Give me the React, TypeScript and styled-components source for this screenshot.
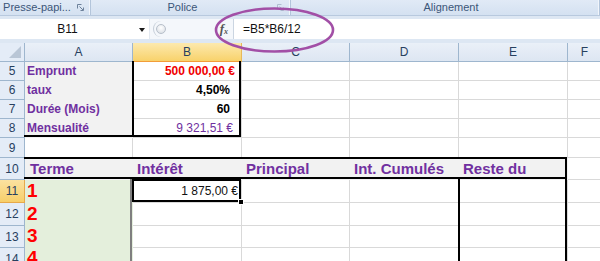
import React from 'react';
import styled, { createGlobalStyle, css } from 'styled-components';

const Global = createGlobalStyle`
  html, body { margin: 0; padding: 0; background: #fff; }
  body { font-family: "Liberation Sans", Arial, sans-serif; width: 600px; height: 261px; overflow: hidden; }
`;

const GRID = '#d9d9d9';
const HEAD_LINE = '#9eb6ce';
const HEAVY = '2px solid #000';
const GRAY_HEAVY = '2px solid #7f7f7f';
const PURPLE = '#7030a0';
const LIGHT = '#f2f2f2';
const GREEN = '#e4efdc';

const Page = styled.div`
  position: relative;
  width: 600px;
  height: 261px;
  overflow: hidden;
  background: #dde7f3;
  display: flex;
  flex-direction: column;
`;

/* ---------- ribbon group labels ---------- */
const Ribbon = styled.div`
  display: flex;
  height: 15px;
  flex: 0 0 15px;
  background: linear-gradient(#e1eaf6, #d4e1f1);
  border-bottom: 1px solid #b8c9de;
`;

const Group = styled.div<{ $w?: number; $pl?: number }>`
  display: flex;
  align-items: center;
  flex: ${(p) => (p.$w ? `0 0 ${p.$w}px` : '1 1 auto')};
  padding-left: ${(p) => p.$pl ?? 0}px;
  border-right: 1px solid #b3c5db;
  box-shadow: inset -1px 0 0 #f1f5fb;
  box-sizing: border-box;
`;

const GroupName = styled.span`
  flex: 1;
  text-align: center;
  font-size: 11px;
  line-height: 15px;
  color: #3b5679;
  white-space: nowrap;
`;

const Launcher = styled.svg<{ $faded?: boolean }>`
  flex: 0 0 7px;
  width: 7px;
  height: 7px;
  margin: 0 6px 0 3px;
  opacity: ${(p) => (p.$faded ? 0.4 : 1)};
`;

const Gap = styled.div<{ $h: number }>`
  flex: 0 0 ${(p) => p.$h}px;
  background: #dde7f3;
`;

/* ---------- formula bar ---------- */
const FormulaBar = styled.div`
  display: flex;
  height: 20px;
  flex: 0 0 20px;
  background: #fff;
`;

const NameBox = styled.div`
  flex: 0 0 150px;
  display: flex;
  align-items: center;
  background: #fff;
  border-right: 1px solid #e3e9f1;
  box-sizing: border-box;
`;

const NameText = styled.span`
  flex: 1;
  text-align: center;
  font-size: 12px;
  color: #111;
`;

const DropArrow = styled.span`
  width: 0;
  height: 0;
  border-left: 3.5px solid transparent;
  border-right: 3.5px solid transparent;
  border-top: 4px solid #1a1a1a;
  margin: 1px 4px 0 4px;
`;

const Mid = styled.div`
  flex: 0 0 83px;
  display: flex;
  align-items: center;
  justify-content: space-between;
  padding: 0 5px 0 3px;
  box-sizing: border-box;
  background: #f4f7fb;
`;

const Splitter = styled.div`
  width: 14px;
  height: 16px;
  border-left: 1px solid #c4ccd7;
  border-radius: 9px 0 0 9px;
  display: flex;
  align-items: center;
  justify-content: center;
`;

const Knob = styled.div`
  width: 10px;
  height: 10px;
  border-radius: 50%;
  border: 1px solid #b7bfca;
  background: radial-gradient(circle at 50% 35%, #ffffff, #d5dae1);
  box-sizing: border-box;
`;

const Fx = styled.span`
  font-family: "Liberation Serif", "DejaVu Serif", serif;
  font-style: italic;
  font-weight: bold;
  font-size: 13px;
  color: #555;
  line-height: 1;
  sub {
    font-size: 8px;
    vertical-align: -1px;
  }
`;

const FormulaInput = styled.div`
  flex: 1;
  display: flex;
  align-items: center;
  padding-left: 9px;
  border-left: 1px solid #cbd5e1;
  font-size: 12px;
  color: #111;
  background: #fff;
`;

const Ellipse = styled.svg`
  position: absolute;
  left: 212px;
  top: 6px;
  width: 126px;
  height: 50px;
  z-index: 5;
  pointer-events: none;
`;

/* ---------- sheet ---------- */
const Sheet = styled.div<{ $rows: string }>`
  display: grid;
  grid-template-columns: 25px 108px 109px 108px 109px 109px 34px;
  grid-template-rows: ${(p) => p.$rows};
  background: #fff;
`;

const Corner = styled.div`
  position: relative;
  background: #e4ecf7;
  border-right: 1px solid ${HEAD_LINE};
  border-bottom: 1px solid ${HEAD_LINE};
  display: flex;
  align-items: flex-end;
  justify-content: flex-end;
  padding: 0 3px 3px 0;
`;

const CornerTri = styled.span`
  width: 0;
  height: 0;
  border-left: 12px solid transparent;
  border-bottom: 12px solid #b9c6d6;
`;

const ColHead = styled.div<{ $active?: boolean }>`
  display: flex;
  align-items: center;
  justify-content: center;
  font-size: 12px;
  color: #27405f;
  border-right: 1px solid ${(p) => (p.$active ? '#e7b95a' : HEAD_LINE)};
  border-bottom: 1px solid ${(p) => (p.$active ? '#f29d38' : HEAD_LINE)};
  background: ${(p) =>
    p.$active ? 'linear-gradient(#fce9ae, #f8d26b)' : 'linear-gradient(#eaf0f8, #dde6f2)'};
`;

const RowHead = styled.div<{ $active?: boolean }>`
  display: flex;
  align-items: center;
  justify-content: center;
  font-size: 12px;
  color: #27405f;
  border-right: 1px solid ${(p) => (p.$active ? '#e7a94a' : HEAD_LINE)};
  border-bottom: 1px solid ${(p) => (p.$active ? '#e7a94a' : HEAD_LINE)};
  background: ${(p) => (p.$active ? 'linear-gradient(#fbe2a0, #f7cf6a)' : '#e4ecf7')};
`;

type Tone = 'label' | 'red' | 'bold' | 'purple' | 'head' | 'big' | 'plain';

const tones: Record<Tone, ReturnType<typeof css>> = {
  label: css`color: ${PURPLE}; font-weight: bold; font-size: 12px; padding-bottom: 1px;`,
  red: css`color: #f00000; font-weight: bold; font-size: 12px; padding-bottom: 1px;`,
  bold: css`color: #000; font-weight: bold; font-size: 12px; padding-bottom: 1px;`,
  purple: css`color: ${PURPLE}; font-size: 12px; padding-bottom: 1px;`,
  head: css`color: ${PURPLE}; font-weight: bold; font-size: 15px; padding-bottom: 2px;`,
  big: css`color: #ff0000; font-weight: bold; font-size: 19px; padding-bottom: 0;`,
  plain: css`color: #111; font-size: 12px; padding-bottom: 3px;`,
};

const Cell = styled.div<{
  $fill?: string;
  $right?: boolean;
  $pad: number;
  $tone: Tone;
  $t?: string;
  $r?: string;
  $b?: string;
  $l?: string;
}>`
  position: relative;
  display: flex;
  align-items: flex-end;
  justify-content: ${(p) => (p.$right ? 'flex-end' : 'flex-start')};
  background: ${(p) => p.$fill ?? '#fff'};
  border-right: 1px solid ${(p) => p.$fill ?? GRID};
  border-bottom: 1px solid ${(p) => p.$fill ?? GRID};
  padding-left: ${(p) => (p.$right ? 0 : p.$pad)}px;
  padding-right: ${(p) => (p.$right ? p.$pad : 0)}px;
  white-space: nowrap;
  line-height: 1.15;
  ${(p) => tones[p.$tone]}
  &::after {
    content: '';
    position: absolute;
    inset: -1px 0 0 -1px;
    pointer-events: none;
    z-index: 1;
    border-top: ${(p) => p.$t ?? 'none'};
    border-right: ${(p) => p.$r ?? 'none'};
    border-bottom: ${(p) => p.$b ?? 'none'};
    border-left: ${(p) => p.$l ?? 'none'};
  }
`;

const FillHandle = styled.span`
  position: absolute;
  right: -3px;
  bottom: -3px;
  width: 4px;
  height: 4px;
  background: #000;
  border: 1px solid #fff;
  z-index: 3;
`;

interface CellSpec {
  text?: string;
  tone?: Tone;
  right?: boolean;
  pad?: number;
  fill?: string;
  t?: string;
  r?: string;
  b?: string;
  l?: string;
  sel?: boolean;
}

interface RowSpec {
  n: string;
  h: number;
  active?: boolean;
  cells: CellSpec[];
}

const blank = (n: number): CellSpec[] => Array.from({ length: n }, () => ({}));

const infoRow = (label: string, value: string, tone: Tone, pad: number, last = false): CellSpec[] => [
  { text: label, tone: 'label', pad: 2, fill: LIGHT, b: last ? HEAVY : undefined },
  { text: value, tone, right: true, pad, l: HEAVY, r: HEAVY, b: last ? HEAVY : undefined },
  ...blank(4),
];

const termRow = (n: string, extra?: CellSpec): CellSpec[] => [
  { text: n, tone: 'big', pad: 2, fill: GREEN, r: GRAY_HEAVY },
  extra ?? {},
  {},
  {},
  { l: HEAVY, r: HEAVY },
  {},
];

const rows: RowSpec[] = [
  { n: '5', h: 19, cells: infoRow('Emprunt', '500 000,00 €', 'red', 6) },
  { n: '6', h: 19, cells: infoRow('taux', '4,50%', 'bold', 11) },
  { n: '7', h: 19, cells: infoRow('Durée (Mois)', '60', 'bold', 11) },
  { n: '8', h: 19, cells: infoRow('Mensualité', '9 321,51 €', 'purple', 8, true) },
  { n: '9', h: 20, cells: blank(6) },
  {
    n: '10',
    h: 22,
    cells: [
      { text: 'Terme', tone: 'head', pad: 5, fill: LIGHT, t: HEAVY, b: HEAVY },
      { text: 'Intérêt', tone: 'head', pad: 4, fill: LIGHT, t: HEAVY, b: HEAVY },
      { text: 'Principal', tone: 'head', pad: 4, fill: LIGHT, t: HEAVY, b: HEAVY },
      { text: 'Int. Cumulés', tone: 'head', pad: 4, fill: LIGHT, t: HEAVY, b: HEAVY },
      { text: 'Reste du', tone: 'head', pad: 4, fill: LIGHT, t: HEAVY, b: HEAVY, r: HEAVY },
      {},
    ],
  },
  {
    n: '11',
    h: 23,
    active: true,
    cells: termRow('1', {
      text: '1 875,00 €',
      tone: 'plain',
      right: true,
      pad: 3,
      sel: true,
      t: HEAVY,
      r: HEAVY,
      b: HEAVY,
      l: HEAVY,
    }),
  },
  { n: '12', h: 23, cells: termRow('2') },
  { n: '13', h: 22, cells: termRow('3') },
  { n: '14', h: 22, cells: termRow('4') },
];

const columns = ['A', 'B', 'C', 'D', 'E', 'F'];
const ACTIVE_COL = 'B';

const LauncherIcon: React.FC<{ faded?: boolean }> = ({ faded }) => (
  <Launcher $faded={faded} viewBox="0 0 7 7">
    <path d="M0.5 4.5V0.5H4.5" stroke="#6d819b" strokeWidth="1" fill="none" />
    <path d="M2.5 2.5L6 6M6.5 3.5V6.5H3.5" stroke="#6d819b" strokeWidth="1" fill="none" />
  </Launcher>
);

export default function App() {
  const template = `19px ${rows.map((r) => `${r.h}px`).join(' ')}`;
  return (
    <>
      <Global />
      <Page>
        <Ribbon>
          <Group $w={91}>
            <GroupName>Presse-papi...</GroupName>
            <LauncherIcon />
          </Group>
          <Group $w={200}>
            <GroupName>Police</GroupName>
            <LauncherIcon faded />
          </Group>
          <Group $pl={12}>
            <GroupName>Alignement</GroupName>
          </Group>
        </Ribbon>
        <Gap $h={3} />
        <FormulaBar>
          <NameBox>
            <NameText>B11</NameText>
            <DropArrow />
          </NameBox>
          <Mid>
            <Splitter>
              <Knob />
            </Splitter>
            <Fx>
              f<sub>x</sub>
            </Fx>
          </Mid>
          <FormulaInput>=B5*B6/12</FormulaInput>
        </FormulaBar>
        <Gap $h={4} />
        <Sheet $rows={template}>
          <Corner>
            <CornerTri />
          </Corner>
          {columns.map((c) => (
            <ColHead key={c} $active={c === ACTIVE_COL}>
              {c}
            </ColHead>
          ))}
          {rows.map((row) => (
            <React.Fragment key={row.n}>
              <RowHead $active={row.active}>{row.n}</RowHead>
              {row.cells.map((c, i) => (
                <Cell
                  key={i}
                  $fill={c.fill}
                  $right={c.right}
                  $pad={c.pad ?? 2}
                  $tone={c.tone ?? 'plain'}
                  $t={c.t}
                  $r={c.r}
                  $b={c.b}
                  $l={c.l}
                >
                  {c.text}
                  {c.sel && <FillHandle />}
                </Cell>
              ))}
            </React.Fragment>
          ))}
        </Sheet>
        <Ellipse viewBox="0 0 126 50">
          <ellipse cx="62.5" cy="24" rx="58.5" ry="21.5" fill="none" stroke="#a24fa6" strokeWidth="2.6" />
        </Ellipse>
      </Page>
    </>
  );
}
